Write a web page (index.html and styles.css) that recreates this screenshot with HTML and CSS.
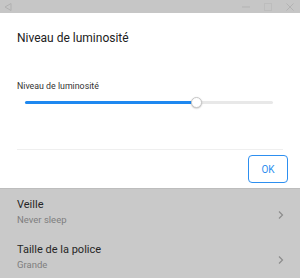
FILE: index.html
```
<!DOCTYPE html>
<html>
<head>
<meta charset="utf-8">
<link rel="stylesheet" href="styles.css">
</head>
<body>
<div class="topbar">
  <svg class="back" width="10" height="10" viewBox="0 0 10 10"><path d="M8 1.5 L2 5 L8 8.5 Z" fill="none" stroke="#b0b0b0" stroke-width="1"/></svg>
  <div class="winctl">
    <svg width="10" height="10" viewBox="0 0 10 10"><path d="M1 5 H9" stroke="#b3b3b3" stroke-width="1"/></svg>
    <svg width="10" height="10" viewBox="0 0 10 10"><rect x="1.5" y="1.5" width="7" height="7" fill="none" stroke="#bdbdbd" stroke-width="1"/></svg>
    <svg width="10" height="10" viewBox="0 0 10 10"><path d="M1.5 1.5 L8.5 8.5 M8.5 1.5 L1.5 8.5" stroke="#b3b3b3" stroke-width="1"/></svg>
  </div>
</div>
<div class="dialog">
  <div class="title">Niveau de luminosité</div>
  <div class="label">Niveau de luminosité</div>
  <div class="slider">
    <div class="track"><div class="fill" style="width:69%"></div><div class="thumb" style="left:69%"></div></div>
  </div>
  <div class="divider"></div>
  <div class="actions"><button class="ok">OK</button></div>
</div>
<div class="list">
  <div class="item">
    <div class="texts"><div class="name">Veille</div><div class="sub">Never sleep</div></div>
    <svg class="chev" width="8" height="10" viewBox="0 0 8 10"><path d="M2 1.5 L5.5 5 L2 8.5" fill="none" stroke="#8c8c8c" stroke-width="1.2"/></svg>
  </div>
  <div class="item">
    <div class="texts"><div class="name">Taille de la police</div><div class="sub">Grande</div></div>
    <svg class="chev" width="8" height="10" viewBox="0 0 8 10"><path d="M2 1.5 L5.5 5 L2 8.5" fill="none" stroke="#8c8c8c" stroke-width="1.2"/></svg>
  </div>
</div>
</body>
</html>
```
FILE: styles.css
```
* { box-sizing: border-box; }
html, body { margin: 0; padding: 0; }
body {
  width: 300px; height: 278px; overflow: hidden;
  background: #c9c9c9;
  font-family: Roboto, "Noto Sans", sans-serif;
}
.topbar {
  height: 13px; background: #c6c6c6;
  display: flex; align-items: center; justify-content: space-between;
  padding: 0 5px 0 3px;
}
.winctl { display: flex; gap: 12px; }
.dialog {
  background: #fff;
  height: 175px;
  display: flex; flex-direction: column;
}
.title {
  font-size: 12px; color: #212121;
  padding: 17px 0 0 17px; line-height: 16px;
}
.label {
  font-size: 8.8px; color: #333;
  padding: 34px 0 0 17px; line-height: 12px;
}
.slider { padding: 9px 27px 0 25px; }
.track {
  position: relative; height: 3px; border-radius: 2px; background: #e8e8e8;
}
.fill { height: 3px; background: #1e88f0; border-radius: 2px; }
.thumb {
  position: absolute; top: -4px; width: 11px; height: 11px; margin-left: -5px;
  border-radius: 50%; background: #fff; border: 1px solid #c8c8c8;
  box-shadow: 0 0.5px 1.5px rgba(0,0,0,0.25);
}
.divider { margin: 45px 17px 0 17px; height: 1px; background: #efefef; }
.actions { display: flex; justify-content: flex-end; padding: 5px 12px 0 0; }
.ok {
  width: 40px; height: 28px; background: #fff;
  border: 1.5px solid #2d8ff0; border-radius: 4px;
  color: #2d8ff0; font-family: Roboto, sans-serif; font-size: 10px; padding: 0;
}
.list { border-top: 1px solid #bdbdbd; }
.item {
  display: flex; align-items: center; justify-content: space-between;
  height: 45px; padding: 0 15px 0 17px;
}
.name { font-size: 11px; color: #262626; line-height: 14px; }
.sub { font-size: 9.5px; color: #7e7e7e; line-height: 12px; margin-top: 2px; }
.chev { margin-top: 6px; }
```
